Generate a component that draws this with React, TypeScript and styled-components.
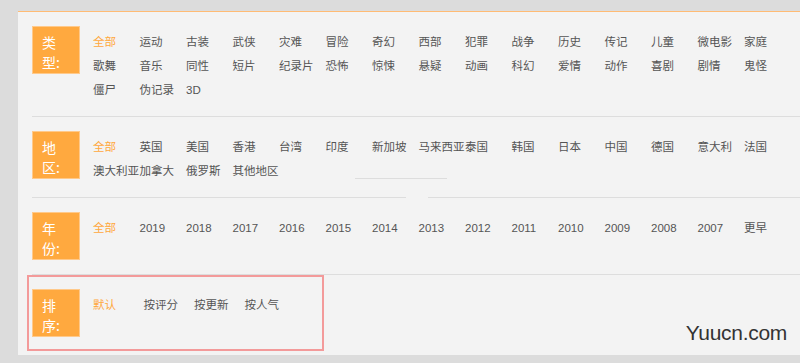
import styled, { createGlobalStyle } from "styled-components";

const GlobalStyle = createGlobalStyle`
	html, body {
		margin: 0;
		padding: 0;
		background: #dcdcdc;
	}
	body {
		font-family: "Liberation Sans", "Noto Sans CJK SC", sans-serif;
	}
`;

const Page = styled.div`
	position: relative;
	width: 800px;
	height: 363px;
	padding: 11px 0 0 18px;
	box-sizing: border-box;
	overflow: hidden;
	background: #dcdcdc;
`;

const Panel = styled.div`
	width: 800px;
	background: #f3f3f3;
	border-top: 1px solid #ffbb74;
	padding-left: 14px;
	box-sizing: border-box;
`;

const Section = styled.div<{ $last?: boolean }>`
	position: relative;
	display: flex;
	align-items: flex-start;
	padding: 14px 0 ${(p) => (p.$last ? "18px" : "14px")} 0;
	border-bottom: ${(p) => (p.$last ? "none" : "1px solid #dddddd")};
`;

const Label = styled.div`
	flex: none;
	width: 48px;
	height: 48px;
	box-sizing: border-box;
	padding: 5px 0 0 9px;
	margin-right: 13px;
	background: #ffa93f;
	border: 1px solid #ffc98a;
	color: #fff;
	font-size: 14px;
	line-height: 20px;
	font-family: "Noto Sans CJK SC", sans-serif;
`;

const Items = styled.div`
	display: flex;
	flex-wrap: wrap;
	width: 707px;
	margin-top: 4px;
`;

const Item = styled.span<{ $active?: boolean; $w?: number }>`
	width: ${(p) => p.$w ?? 46.5}px;
	white-space: nowrap;
	font-size: 11.5px;
	line-height: 24px;
	color: ${(p) => (p.$active ? "#ffa83d" : "#555")};
	cursor: pointer;
`;

/* red annotation box drawn over the sort row */
const Highlight = styled.div`
	position: absolute;
	left: -5px;
	top: 0;
	width: 297px;
	height: 76px;
	box-sizing: border-box;
	border: 2px solid #f39a9a;
	pointer-events: none;
`;

/* capture artifacts in the region row */
const StrayLine = styled.div`
	position: absolute;
	left: 323px;
	bottom: 18px;
	width: 92px;
	height: 1px;
	background: #dddddd;
`;

const DividerGap = styled.div`
	position: absolute;
	left: 374px;
	bottom: -1px;
	width: 22px;
	height: 1px;
	background: #f3f3f3;
`;

const Watermark = styled.div`
	position: absolute;
	right: 13px;
	top: 321px;
	font-family: "Liberation Sans", Arial, sans-serif;
	font-size: 21px;
	color: #333;
	letter-spacing: -0.3px;
`;

type Group = {
	label: [string, string];
	items: string[];
	width?: number;
	highlight?: boolean;
	artifacts?: boolean;
};

const groups: Group[] = [
	{
		label: ["类", "型:"],
		items: [
			"全部", "运动", "古装", "武侠", "灾难", "冒险", "奇幻", "西部", "犯罪", "战争",
			"历史", "传记", "儿童", "微电影", "家庭", "歌舞", "音乐", "同性", "短片", "纪录片",
			"恐怖", "惊悚", "悬疑", "动画", "科幻", "爱情", "动作", "喜剧", "剧情", "鬼怪",
			"僵尸", "伪记录", "3D",
		],
	},
	{
		label: ["地", "区:"],
		items: [
			"全部", "英国", "美国", "香港", "台湾", "印度", "新加坡", "马来西亚", "泰国", "韩国",
			"日本", "中国", "德国", "意大利", "法国", "澳大利亚", "加拿大", "俄罗斯", "其他地区",
		],
		artifacts: true,
	},
	{
		label: ["年", "份:"],
		items: [
			"全部", "2019", "2018", "2017", "2016", "2015", "2014", "2013", "2012", "2011",
			"2010", "2009", "2008", "2007", "更早",
		],
	},
	{
		label: ["排", "序:"],
		items: ["默认", "按评分", "按更新", "按人气"],
		width: 50.5,
		highlight: true,
	},
];

export default function App() {
	return (
		<Page>
			<GlobalStyle />
			<Panel>
				{groups.map((g, gi) => (
					<Section key={gi} $last={gi === groups.length - 1}>
						<Label>
							{g.label[0]}
							<br />
							{g.label[1]}
						</Label>
						<Items>
							{g.items.map((it, i) => (
								<Item key={it + i} $active={i === 0} $w={g.width}>
									{it}
								</Item>
							))}
						</Items>
						{g.artifacts && (
							<>
								<StrayLine />
								<DividerGap />
							</>
						)}
						{g.highlight && <Highlight />}
					</Section>
				))}
			</Panel>
			<Watermark>Yuucn.com</Watermark>
		</Page>
	);
}
